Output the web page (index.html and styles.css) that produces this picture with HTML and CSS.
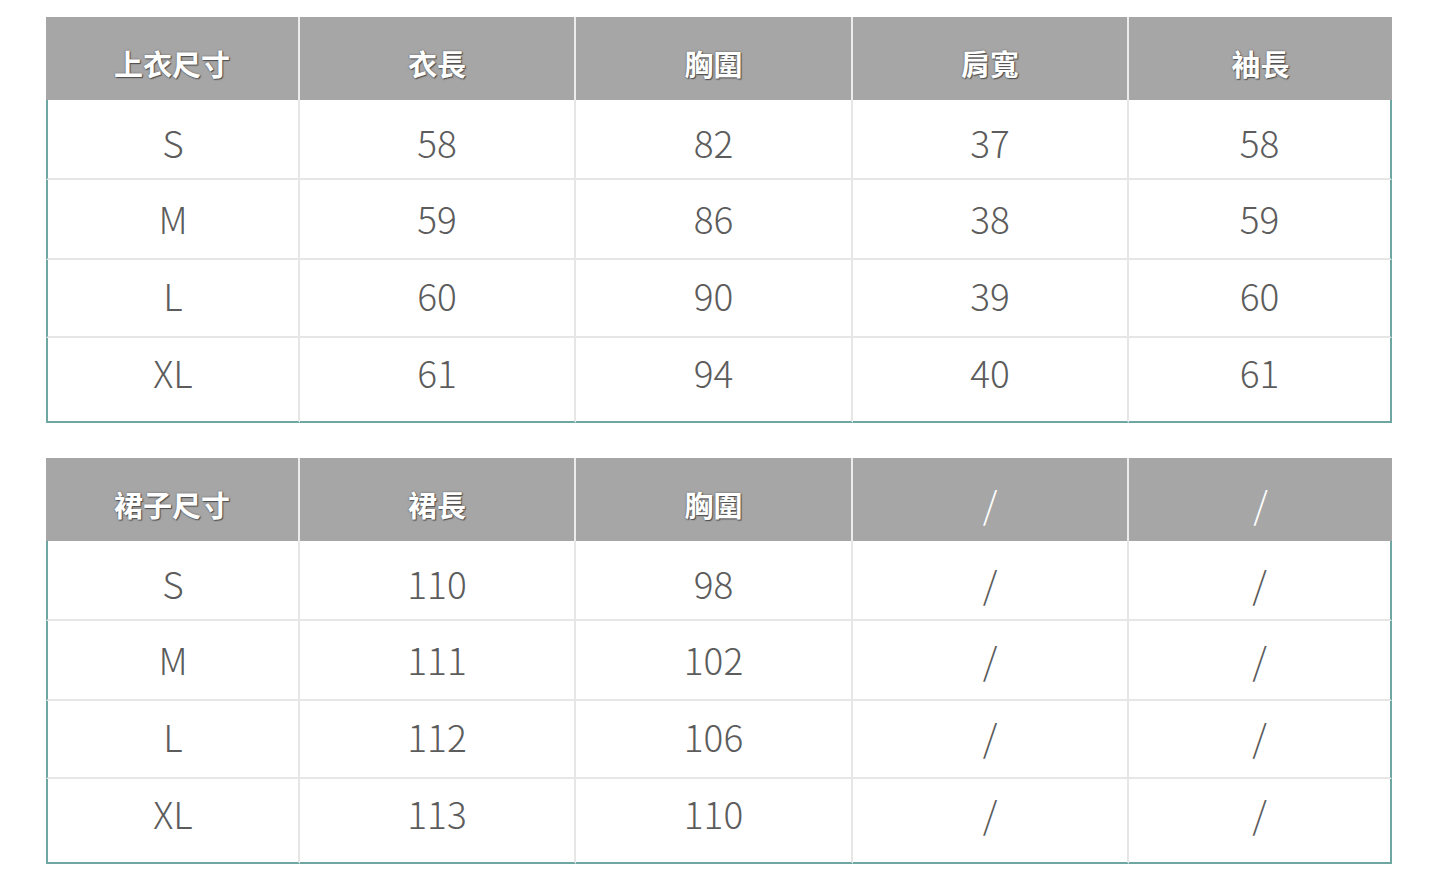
FILE: index.html
```html
<!DOCTYPE html>
<html lang="zh-Hant">
<head>
<meta charset="utf-8">
<title>尺寸表</title>
<link rel="stylesheet" href="styles.css">
</head>
<body>
<main class="page">
  <table class="size-table">
    <colgroup>
      <col class="c1"><col class="c2"><col class="c3"><col class="c4"><col class="c5">
    </colgroup>
    <thead>
      <tr><th>上衣尺寸</th><th>衣長</th><th>胸圍</th><th>肩寬</th><th>袖長</th></tr>
    </thead>
    <tbody>
      <tr><td>S</td><td>58</td><td>82</td><td>37</td><td>58</td></tr>
      <tr><td>M</td><td>59</td><td>86</td><td>38</td><td>59</td></tr>
      <tr><td>L</td><td>60</td><td>90</td><td>39</td><td>60</td></tr>
      <tr><td>XL</td><td>61</td><td>94</td><td>40</td><td>61</td></tr>
    </tbody>
  </table>

  <table class="size-table">
    <colgroup>
      <col class="c1"><col class="c2"><col class="c3"><col class="c4"><col class="c5">
    </colgroup>
    <thead>
      <tr><th>裙子尺寸</th><th>裙長</th><th>胸圍</th><th class="slash">/</th><th class="slash">/</th></tr>
    </thead>
    <tbody>
      <tr><td>S</td><td>110</td><td>98</td><td>/</td><td>/</td></tr>
      <tr><td>M</td><td>111</td><td>102</td><td>/</td><td>/</td></tr>
      <tr><td>L</td><td>112</td><td>106</td><td>/</td><td>/</td></tr>
      <tr><td>XL</td><td>113</td><td>110</td><td>/</td><td>/</td></tr>
    </tbody>
  </table>
</main>
</body>
</html>
```

FILE: styles.css
```css
html, body {
  margin: 0;
  padding: 0;
  background: #ffffff;
}

.page {
  padding: 17px 0 0 46px;
  display: flex;
  flex-direction: column;
  gap: 35px;
  font-family: "Noto Sans CJK TC", "Noto Sans", sans-serif;
}

.size-table {
  width: 1346px;
  table-layout: fixed;
  border-collapse: separate;
  border-spacing: 0;
}

.c1 { width: 254px; }
.c2 { width: 276px; }
.c3 { width: 277px; }
.c4 { width: 276px; }
.c5 { width: 263px; }

.size-table th {
  height: 83px;
  padding: 8px 0 0 0;
  box-sizing: border-box;
  background: #a6a6a6;
  color: #ffffff;
  font-size: 29px;
  font-weight: 700;
  text-align: center;
  vertical-align: middle;
  border-right: 2px solid #ececec;
  text-shadow: 0 0 2px #5a5a5a, 1px 1px 1px #4a4a4a;
}

.size-table th:last-child {
  border-right: none;
}

.size-table th.slash {
  font-size: 37px;
  font-weight: 300;
  text-shadow: none;
  padding-top: 6px;
}

.size-table td {
  box-sizing: border-box;
  color: #5c5c5c;
  font-size: 37px;
  font-weight: 300;
  text-align: center;
  vertical-align: middle;
  border-right: 2px solid #e6e6e6;
  border-bottom: 2px solid #e6e6e6;
  line-height: 1;
}

.size-table td:first-child {
  border-left: 2px solid #6ea6a1;
}

.size-table td:last-child {
  border-right: 2px solid #6ea6a1;
}

.size-table tbody tr:nth-child(1) td {
  height: 80px;
  padding: 6px 0 0 0;
}
.size-table tbody tr:nth-child(2) td {
  height: 80px;
  padding: 0 0 2px 0;
}
.size-table tbody tr:nth-child(3) td {
  height: 78px;
  padding: 0 0 6px 0;
}
.size-table tbody tr:nth-child(4) td {
  height: 85px;
  padding: 0 0 14px 0;
  border-bottom: 2px solid #6ea6a1;
}
```
